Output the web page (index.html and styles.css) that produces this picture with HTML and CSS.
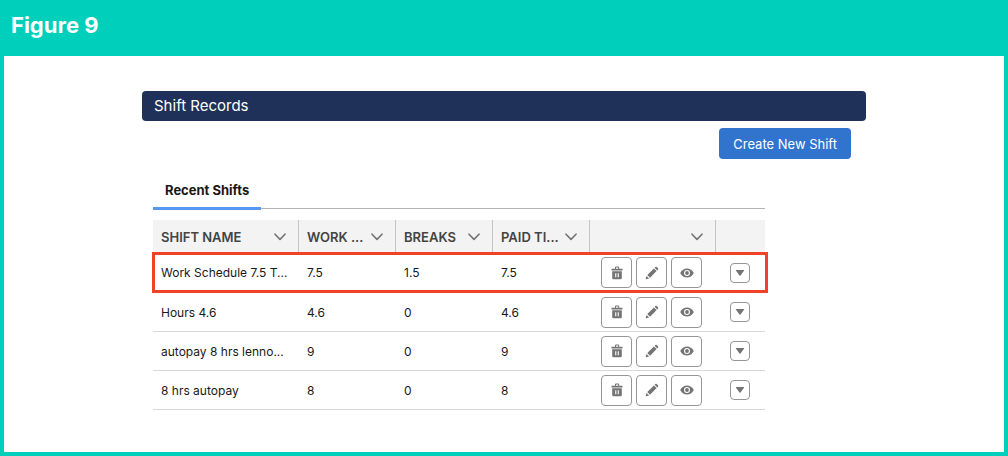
FILE: index.html
```html
<!DOCTYPE html>
<html lang="en">
<head>
    <meta charset="utf-8"/>
    <title>Shift Records</title>
    <link rel="stylesheet" href="styles.css">
</head>
<body>
    <!-- shared icons -->
    <svg class="sprite" aria-hidden="true">
        <symbol id="chevron" viewBox="0 0 12 8">
            <path d="M1 1.2 L6 6.4 L11 1.2" fill="none" stroke="currentColor" stroke-width="1.6" stroke-linecap="round" stroke-linejoin="round"/>
        </symbol>
        <symbol id="trash" viewBox="0 0 14 14">
            <path d="M1.5 2.7 H5 V1.6 Q5 .6 6 .6 H8.2 Q9.2 .6 9.2 1.6 V2.7 H12.5 V4.5 H1.5 Z M6 2.7 H8.2 V1.6 H6 Z" fill="currentColor" fill-rule="evenodd"/>
            <path d="M2.2 5.3 H11.8 V12 Q11.8 13.3 10.5 13.3 H3.5 Q2.2 13.3 2.2 12 Z M5.2 7.2 V11.3 H6.3 V7.2 Z M7.7 7.2 V11.3 H8.8 V7.2 Z" fill="currentColor" fill-rule="evenodd"/>
        </symbol>
        <symbol id="pencil" viewBox="0 0 14 14">
            <path d="M10.3 1 Q11 .3 11.7 1 L13 2.3 Q13.7 3 13 3.7 L12.3 4.4 L9.6 1.7 Z" fill="currentColor"/>
            <path d="M8.9 2.4 L11.6 5.1 L5 11.7 L2.3 9 Z" fill="currentColor"/>
            <path d="M1.6 9.9 L4.1 12.4 L1.1 13.2 Q.5 13.3 .7 12.8 Z" fill="currentColor"/>
        </symbol>
        <symbol id="eye" viewBox="0 0 14 14">
            <path d="M.2 7 Q2.6 2.4 7 2.4 Q11.4 2.4 13.8 7 Q11.4 11.6 7 11.6 Q2.6 11.6 .2 7 Z M7 4 A3 3 0 1 0 7 10 A3 3 0 1 0 7 4 Z" fill="currentColor" fill-rule="evenodd"/>
            <circle cx="7" cy="7" r="1.9" fill="currentColor"/>
        </symbol>
        <symbol id="down" viewBox="0 0 10 8">
            <path d="M1.2 1 H8.8 Q9.4 1.1 9 1.7 L5.5 6.4 Q5 7 4.5 6.4 L1 1.7 Q.6 1.1 1.2 1 Z" fill="currentColor"/>
        </symbol>
    </svg>

    <h1 class="figure-title">Figure 9</h1>

    <main class="panel">
        <div class="card">
            <h2 class="card-header">Shift Records</h2>

            <div class="toolbar">
                <button type="button" class="create-button">Create New Shift</button>
            </div>

            <div class="content">
                <div class="tabs" role="tablist">
                    <button type="button" class="tab active" role="tab" aria-selected="true">Recent Shifts</button>
                </div>

                <table class="shift-table">
                    <colgroup>
                        <col class="col-name">
                        <col class="col-num">
                        <col class="col-num">
                        <col class="col-num">
                        <col class="col-actions">
                        <col class="col-menu">
                    </colgroup>
                    <thead>
                        <tr>
                            <th><div class="head">SHIFT NAME<svg class="chevron"><use href="#chevron"/></svg></div></th>
                            <th><div class="head">WORK ...<svg class="chevron"><use href="#chevron"/></svg></div></th>
                            <th><div class="head">BREAKS<svg class="chevron"><use href="#chevron"/></svg></div></th>
                            <th><div class="head">PAID TI...<svg class="chevron"><use href="#chevron"/></svg></div></th>
                            <th><div class="head"><svg class="chevron"><use href="#chevron"/></svg></div></th>
                            <th></th>
                        </tr>
                    </thead>
                    <tbody>
                        <tr class="highlight">
                            <td>Work Schedule 7.5 T...</td>
                            <td>7.5</td>
                            <td>1.5</td>
                            <td>7.5</td>
                            <td>
                                <div class="actions">
                                    <button type="button" class="icon-button"><svg class="icon"><use href="#trash"/></svg></button>
                                    <button type="button" class="icon-button"><svg class="icon"><use href="#pencil"/></svg></button>
                                    <button type="button" class="icon-button"><svg class="icon"><use href="#eye"/></svg></button>
                                </div>
                            </td>
                            <td><button type="button" class="menu-button"><svg class="down"><use href="#down"/></svg></button></td>
                        </tr>
                        <tr>
                            <td>Hours 4.6</td>
                            <td>4.6</td>
                            <td>0</td>
                            <td>4.6</td>
                            <td>
                                <div class="actions">
                                    <button type="button" class="icon-button"><svg class="icon"><use href="#trash"/></svg></button>
                                    <button type="button" class="icon-button"><svg class="icon"><use href="#pencil"/></svg></button>
                                    <button type="button" class="icon-button"><svg class="icon"><use href="#eye"/></svg></button>
                                </div>
                            </td>
                            <td><button type="button" class="menu-button"><svg class="down"><use href="#down"/></svg></button></td>
                        </tr>
                        <tr>
                            <td>autopay 8 hrs lenno...</td>
                            <td>9</td>
                            <td>0</td>
                            <td>9</td>
                            <td>
                                <div class="actions">
                                    <button type="button" class="icon-button"><svg class="icon"><use href="#trash"/></svg></button>
                                    <button type="button" class="icon-button"><svg class="icon"><use href="#pencil"/></svg></button>
                                    <button type="button" class="icon-button"><svg class="icon"><use href="#eye"/></svg></button>
                                </div>
                            </td>
                            <td><button type="button" class="menu-button"><svg class="down"><use href="#down"/></svg></button></td>
                        </tr>
                        <tr>
                            <td>8 hrs autopay</td>
                            <td>8</td>
                            <td>0</td>
                            <td>8</td>
                            <td>
                                <div class="actions">
                                    <button type="button" class="icon-button"><svg class="icon"><use href="#trash"/></svg></button>
                                    <button type="button" class="icon-button"><svg class="icon"><use href="#pencil"/></svg></button>
                                    <button type="button" class="icon-button"><svg class="icon"><use href="#eye"/></svg></button>
                                </div>
                            </td>
                            <td><button type="button" class="menu-button"><svg class="down"><use href="#down"/></svg></button></td>
                        </tr>
                    </tbody>
                </table>
            </div>
        </div>
    </main>
</body>
</html>
```

FILE: styles.css
```css
* {
    box-sizing: border-box;
}

body {
    margin: 0;
    min-height: 100vh;
    padding: 0 4px 4px;
    display: flex;
    flex-direction: column;
    background: #00cfbb;
    color: #181818;
    font-family: Inter, 'Liberation Sans', sans-serif;
    font-size: 12px;
}

button {
    font-family: inherit;
    cursor: pointer;
}

.sprite {
    display: none;
}

.figure-title {
    margin: 0;
    padding: 11px 7px 17px;
    color: white;
    font-size: 22px;
    font-weight: 700;
    line-height: 28px;
}

.panel {
    flex: 1;
    padding: 35px 20px 42px;
    background: white;
}

.card {
    max-width: 724px;
    margin: 0 auto;
}

.card-header {
    margin: 0;
    padding: 0 12px;
    background: #1f3158;
    border-radius: 4px;
    color: white;
    font-size: 15px;
    font-weight: 400;
    line-height: 30px;
}

.toolbar {
    display: flex;
    justify-content: flex-end;
    padding: 7px 15px 0;
}

.create-button {
    height: 31px;
    padding: 0 14px;
    background: #3174cd;
    border: none;
    border-radius: 4px;
    color: white;
    font-size: 13px;
}

.content {
    max-width: 623px;
    padding: 12px 0 0 11px;
}

.tabs {
    display: flex;
    height: 38px;
    margin-bottom: 11px;
    border-bottom: 1px solid #b4b4b4;
}

.tab {
    height: 39px;
    padding: 2px 12px 0;
    background: none;
    border: none;
    color: #181818;
    font-size: 13px;
    font-weight: 700;
}

.tab.active {
    border-bottom: 3px solid #5896f4;
}

.shift-table {
    width: 100%;
    border-collapse: separate;
    border-spacing: 0;
    table-layout: fixed;
}

.col-name {
    width: 146px;
}

.col-num {
    width: 97px;
}

.col-actions {
    width: 126px;
}

.shift-table th {
    height: 33px;
    padding: 0 12px 0 8px;
    background: #f3f3f3;
    border-right: 1px solid #c4c4c4;
    color: #444;
    font-size: 13px;
    font-weight: 600;
    text-align: left;
}

.shift-table th:last-child {
    border-right: none;
}

.head {
    display: flex;
    align-items: center;
    white-space: nowrap;
}

.chevron {
    width: 12px;
    height: 8px;
    margin-left: auto;
    color: #747474;
}

.shift-table td {
    height: 39px;
    padding: 0 0 0 8px;
    border-bottom: 1px solid #d8d8d8;
    white-space: nowrap;
}

.shift-table td:nth-child(5) {
    padding-left: 11px;
}

.shift-table td:last-child {
    padding-left: 14px;
}

/* red frame around the new record */
.highlight {
    position: relative;
}

.highlight td {
    height: 40px;
}

.highlight td:first-child::after {
    content: '';
    position: absolute;
    inset: -1px -3px 0 -1px;
    border: 3px solid #ee4326;
    pointer-events: none;
}

.actions {
    display: flex;
    gap: 4px;
}

.icon-button,
.menu-button {
    display: flex;
    align-items: center;
    justify-content: center;
    padding: 0;
    background: white;
    border: 1px solid #969696;
    border-radius: 4px;
    color: #747474;
}

.icon-button {
    width: 31px;
    height: 31px;
}

.menu-button {
    width: 20px;
    height: 20px;
}

.icon {
    width: 14px;
    height: 14px;
}

.down {
    width: 10px;
    height: 8px;
}
```
